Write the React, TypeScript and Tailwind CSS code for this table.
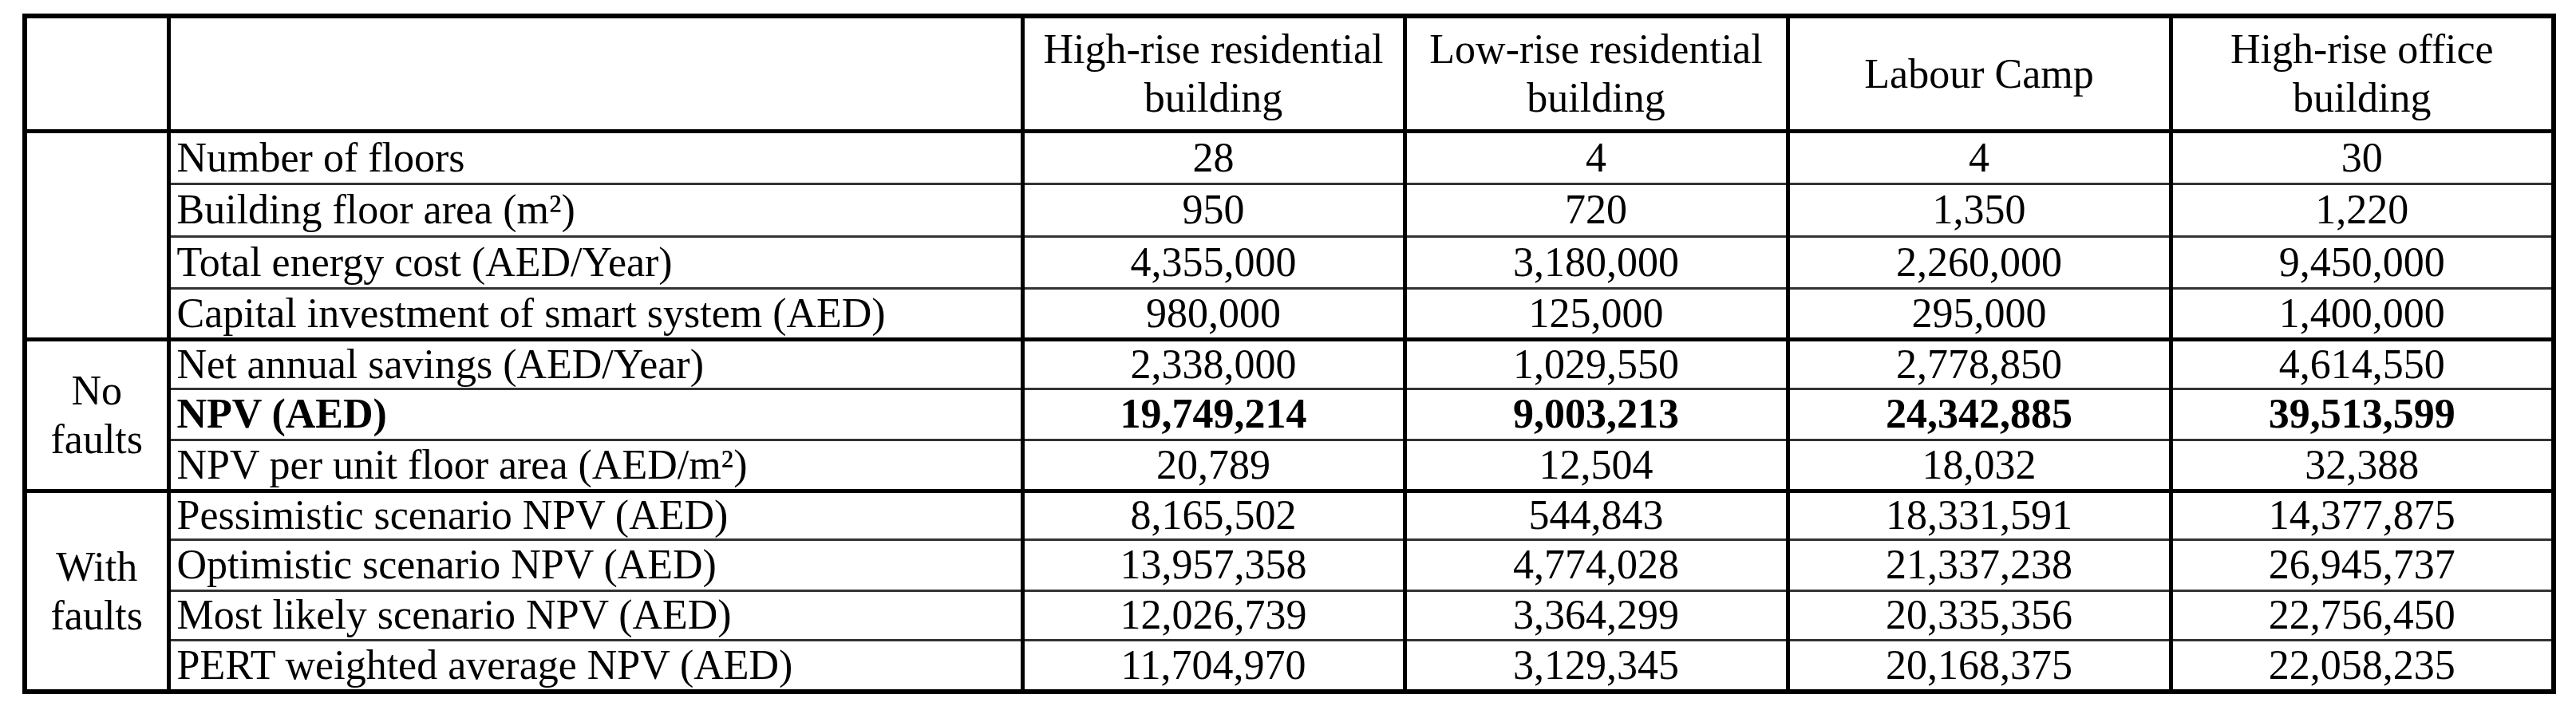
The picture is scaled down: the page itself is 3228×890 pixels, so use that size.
const serif = "font-['Liberation_Serif','Times_New_Roman',serif]"

type Row = { label: string; values: string[]; h: string; bold?: boolean }

const groups: { name: string[]; rows: Row[] }[] = [
  {
    name: [],
    rows: [
      { label: "Number of floors", values: ["28", "4", "4", "30"], h: "h-[66px]" },
      { label: "Building floor area (m²)", values: ["950", "720", "1,350", "1,220"], h: "h-[66px]" },
      { label: "Total energy cost (AED/Year)", values: ["4,355,000", "3,180,000", "2,260,000", "9,450,000"], h: "h-[65px]" },
      { label: "Capital investment of smart system (AED)", values: ["980,000", "125,000", "295,000", "1,400,000"], h: "h-[64px]" },
    ],
  },
  {
    name: ["No", "faults"],
    rows: [
      { label: "Net annual savings (AED/Year)", values: ["2,338,000", "1,029,550", "2,778,850", "4,614,550"], h: "h-[62px]" },
      { label: "NPV (AED)", values: ["19,749,214", "9,003,213", "24,342,885", "39,513,599"], h: "h-[64px]", bold: true },
      { label: "NPV per unit floor area (AED/m²)", values: ["20,789", "12,504", "18,032", "32,388"], h: "h-[64px]" },
    ],
  },
  {
    name: ["With", "faults"],
    rows: [
      { label: "Pessimistic scenario NPV (AED)", values: ["8,165,502", "544,843", "18,331,591", "14,377,875"], h: "h-[61px]" },
      { label: "Optimistic scenario NPV (AED)", values: ["13,957,358", "4,774,028", "21,337,238", "26,945,737"], h: "h-[64px]" },
      { label: "Most likely scenario NPV (AED)", values: ["12,026,739", "3,364,299", "20,335,356", "22,756,450"], h: "h-[62px]" },
      { label: "PERT weighted average NPV (AED)", values: ["11,704,970", "3,129,345", "20,168,375", "22,058,235"], h: "h-[65px]" },
    ],
  },
]

const headers = [
  ["High-rise residential", "building"],
  ["Low-rise residential", "building"],
  ["Labour Camp"],
  ["High-rise office", "building"],
]

export default function App() {
  return (
    <div className={`min-h-screen bg-white pl-[28px] pt-[17px] text-black ${serif}`}>
      <table className="table-fixed border-collapse border-[6px] border-black text-[52px] leading-[61px]">
        <colgroup>
          <col className="w-[180px]" />
          <col className="w-[1070px]" />
          <col className="w-[479px]" />
          <col className="w-[480px]" />
          <col className="w-[480px]" />
          <col className="w-[480px]" />
        </colgroup>
        <thead>
          <tr className="h-[144px]">
            <th className="border-[5px] border-black p-0" />
            <th className="border-[5px] border-black p-0" />
            {headers.map((lines, i) => (
              <th key={i} className="border-[5px] border-black p-0 text-center align-middle font-normal">
                {lines.map((l, j) => (
                  <div key={j} className="whitespace-nowrap">{l}</div>
                ))}
              </th>
            ))}
          </tr>
        </thead>
        <tbody>
          {groups.map((g, gi) =>
            g.rows.map((r, ri) => {
              const last = ri === g.rows.length - 1
              const bottom = last ? "border-b-[5px] border-b-black" : "border-b-[3px] border-b-[#333]"
              return (
                <tr key={`${gi}-${ri}`} className={r.h}>
                  {ri === 0 && (
                    <td
                      rowSpan={g.rows.length}
                      className="border-x-[5px] border-b-[5px] border-black p-0 text-center align-middle"
                    >
                      {g.name.map((n) => (
                        <div key={n}>{n}</div>
                      ))}
                    </td>
                  )}
                  <td
                    className={`whitespace-nowrap border-x-[5px] border-x-black py-0 pl-[8px] align-middle leading-[56px] ${bottom} ${r.bold ? "font-bold" : ""}`}
                  >
                    {r.label}
                  </td>
                  {r.values.map((v, vi) => (
                    <td
                      key={vi}
                      className={`border-x-[5px] border-x-black p-0 text-center align-middle leading-[56px] ${bottom} ${r.bold ? "font-bold" : ""}`}
                    >
                      {v}
                    </td>
                  ))}
                </tr>
              )
            })
          )}
        </tbody>
      </table>
    </div>
  )
}
